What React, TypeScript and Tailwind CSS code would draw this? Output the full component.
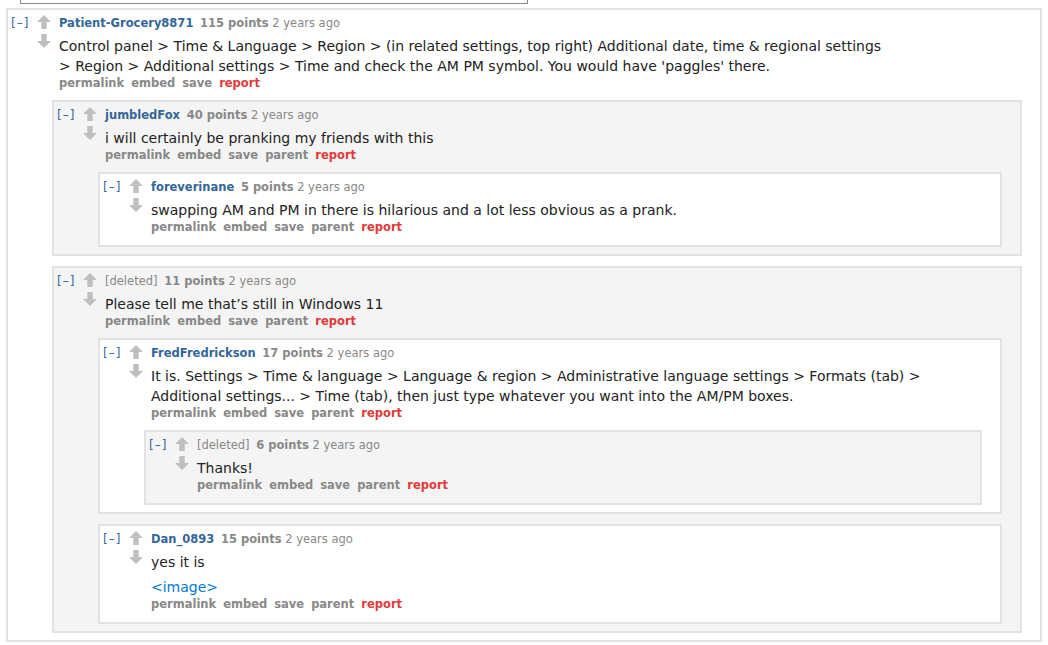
import type { ReactNode } from "react";

type Item = {
  author: string;
  deleted?: boolean;
  points: string;
  body: ReactNode;
  parent?: boolean;
  children?: Item[];
};

const comments: Item = {
  author: "Patient-Grocery8871",
  points: "115 points",
  body: (
    <p>
      Control panel &gt; Time &amp; Language &gt; Region &gt; (in related settings, top right) Additional date, time
      &amp; regional settings &gt; Region &gt; Additional settings &gt; Time and check the AM PM symbol. You would
      have 'paggles' there.
    </p>
  ),
  children: [
    {
      author: "jumbledFox",
      points: "40 points",
      parent: true,
      body: <p>i will certainly be pranking my friends with this</p>,
      children: [
        {
          author: "foreverinane",
          points: "5 points",
          parent: true,
          body: <p>swapping AM and PM in there is hilarious and a lot less obvious as a prank.</p>,
        },
      ],
    },
    {
      author: "[deleted]",
      deleted: true,
      points: "11 points",
      parent: true,
      body: <p>Please tell me that’s still in Windows 11</p>,
      children: [
        {
          author: "FredFredrickson",
          points: "17 points",
          parent: true,
          body: (
            <p>
              It is. Settings &gt; Time &amp; language &gt; Language &amp; region &gt; Administrative language settings
              &gt; Formats (tab) &gt; Additional settings... &gt; Time (tab), then just type whatever you want into the
              AM/PM boxes.
            </p>
          ),
          children: [
            {
              author: "[deleted]",
              deleted: true,
              points: "6 points",
              parent: true,
              body: <p>Thanks!</p>,
            },
          ],
        },
        {
          author: "Dan_0893",
          points: "15 points",
          parent: true,
          body: (
            <>
              <p>yes it is</p>
              <p className="mt-[5px]">
                <a className="text-[#0079d3]">&lt;image&gt;</a>
              </p>
            </>
          ),
        },
      ],
    },
  ],
};

function Arrow({ down }: { down?: boolean }) {
  return (
    <svg width="14" height="14" viewBox="0 0 14 14" className={down ? "rotate-180" : ""}>
      <path d="M7 0 L14 7 L9.7 7 L9.7 14 L4.3 14 L4.3 7 L0 7 Z" fill="#bfbfbf" />
    </svg>
  );
}

function Comment({ c, depth }: { c: Item; depth: number }) {
  const bg = depth % 2 === 0 ? "bg-white" : "bg-[#f4f4f4]";
  const leaf = !c.children;
  return (
    <div
      className={`border-2 border-[#e2e2e2] ${bg} pl-[3px] pr-[18px] pt-[5px] ${leaf ? "pb-[11px]" : "pb-[7px]"}`}
    >
      <div className="flex">
        <span className="w-[26px] text-[12px] leading-[16px] text-[#336699] tracking-[1px]">[–]</span>
        <div className="w-[22px] flex flex-col gap-[5px]">
          <Arrow />
          <Arrow down />
        </div>
        <div className="flex-1 min-w-0">
          <div className="text-[11.5px] leading-[16px] text-[#888]">
            {c.deleted ? (
              <span className="text-[#888]">[deleted]</span>
            ) : (
              <span className="font-bold text-[#336699]">{c.author}</span>
            )}{" "}
            <span className="font-bold text-[#888] ml-[3px]">{c.points}</span> 2 years ago
          </div>
          <div className="max-w-[830px] text-[14px] leading-[20px] text-[#222] mt-[5px]">{c.body}</div>
          <div className="flex gap-[7px] text-[11.5px] leading-[14px] font-bold text-[#888]">
            <span>permalink</span>
            <span>embed</span>
            <span>save</span>
            {c.parent && <span>parent</span>}
            <span className="text-[#e03a3a]">report</span>
          </div>
        </div>
      </div>
      {c.children && (
        <div className="ml-[41px] mt-[10px] flex flex-col gap-[10px]">
          {c.children.map((ch, i) => (
            <Comment key={i} c={ch} depth={depth + 1} />
          ))}
        </div>
      )}
    </div>
  );
}

export default function App() {
  return (
    <main className="min-h-screen bg-white" style={{ fontFamily: "'DejaVu Sans', Verdana, sans-serif" }}>
      {/* end of the reply box above */}
      <div className="ml-[20px] w-[508px] h-[4px] border-x border-b border-[#8a8a8a]" />
      <div className="mt-[4px] ml-[6px] w-[1036px]">
        <Comment c={comments} depth={0} />
      </div>
    </main>
  );
}
